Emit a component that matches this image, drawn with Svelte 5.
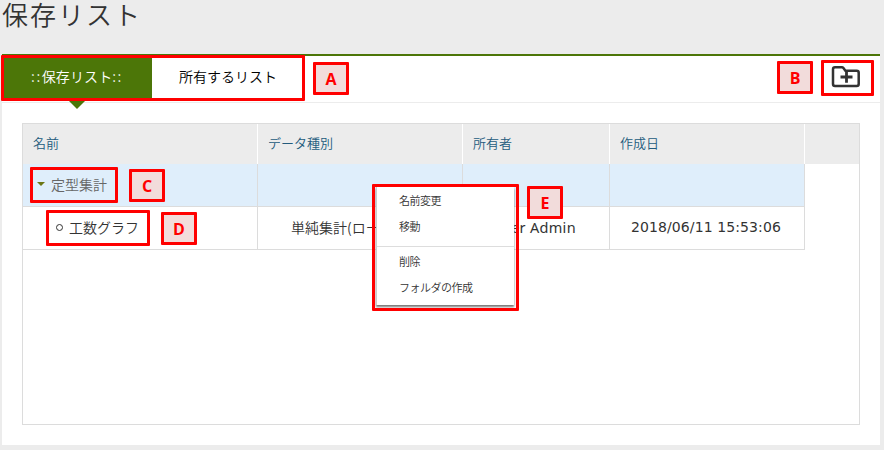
<script>
  const columns = ['名前', 'データ種別', '所有者', '作成日'];
</script>

{#snippet mark(letter, x, y)}
  <span class="mark" style:left="{x}px" style:top="{y}px"><span>{letter}</span></span>
{/snippet}

{#snippet frame(x, y, w, h)}
  <span class="frame" style:left="{x}px" style:top="{y}px" style:width="{w}px" style:height="{h}px"></span>
{/snippet}

<div class="page">
  <h1>保存リスト</h1>
  <main>
    <nav>
      <button class="tab active">::<span>保存リスト</span>::</button>
      <button class="tab">所有するリスト</button>
      <button class="add" aria-label="フォルダの作成">
        <svg width="30" height="24" viewBox="0 0 30 24" fill="none" stroke="#333" stroke-width="2.5">
          <path d="M4 2.3h6.8q1 0 1.6.8l2 2.7h11.3q2 0 2 2v11.1q0 2-2 2H4q-2 0-2-2V4.3q0-2 2-2z" stroke-linejoin="round" />
          <path d="M9.5 12h12M15.5 6.3v11.4" stroke-width="2.8" />
        </svg>
      </button>
    </nav>
    <section class="list">
      <div class="row head">
        {#each columns as c}<div class="cell">{c}</div>{/each}
      </div>
      <div class="row folder">
        <div class="cell"><i class="caret"></i><span>定型集計</span></div>
        <div class="cell"></div><div class="cell"></div><div class="cell"></div>
      </div>
      <div class="row item">
        <div class="cell"><i class="dot"></i><span>工数グラフ</span></div>
        <div class="cell">単純集計(ロー</div>
        <div class="cell"><span class="owner">User Admin</span></div>
        <div class="cell"><span class="date">2018/06/11 15:53:06</span></div>
      </div>
    </section>
  </main>

  <div class="menu">
    <div>名前変更</div>
    <div>移動</div>
    <hr />
    <div>削除</div>
    <div>フォルダの作成</div>
  </div>

  {@render frame(1, 55, 304, 46)}
  {@render frame(821, 60, 53, 36)}
  {@render frame(30, 167, 88, 36)}
  {@render frame(46, 210, 104, 36)}
  {@render frame(372, 184, 147, 127)}
  {@render mark('A', 313, 62)}
  {@render mark('B', 777, 61)}
  {@render mark('C', 129, 169)}
  {@render mark('D', 161, 212)}
  {@render mark('E', 527, 186)}
</div>

<style>
  :global(body) { margin: 0; background: #ececec; }
  .page {
    position: relative; box-sizing: border-box; width: 884px; height: 450px; overflow: hidden;
    padding: 0 4px 5px 2px; background: #ececec; color: #333;
    font: 350 14px/20px "Noto Sans CJK JP", "DejaVu Sans", sans-serif;
    display: flex; flex-direction: column;
  }
  h1 {
    box-sizing: border-box; margin: 0; padding-top: 1px; height: 54px;
    font: 350 26px/30px "Liberation Sans", "Noto Sans CJK JP", sans-serif;
    letter-spacing: 2px; white-space: nowrap;
  }
  main { flex: 1; background: #fff; border-top: 2px solid #4c7608; }
  nav { display: flex; height: 46px; border-bottom: 1px solid #ececec; }
  .tab {
    position: relative; border: 0; padding: 0 0 6px; width: 152px; background: #fff; color: #000;
    font: 350 14px/20px "Noto Sans CJK JP", sans-serif; white-space: nowrap;
  }
  .tab.active { width: 150px; height: 45px; padding-bottom: 5px; background: #4c7608; color: #fff; letter-spacing: 1.6px; }
  .tab.active span { letter-spacing: .1px; }
  .tab.active::after {
    content: ""; position: absolute; left: 67px; top: 45px;
    border: 8px solid transparent; border-top-color: #4c7608; border-bottom: 0;
  }
  .add { margin: 8px 18px 0 auto; padding: 0; width: 32px; height: 26px; border: 0; background: none; }
  .add svg { display: block; margin-left: 1px; }
  .list { box-sizing: border-box; width: 838px; height: 302px; margin: 20px 0 0 20px; border: 1px solid #dcdcdc; }
  .row { display: grid; grid-template-columns: 235px 205px 147px 195px; height: 43px; }
  .cell { box-sizing: border-box; display: flex; align-items: center; border-right: 1px solid #dcdcdc; border-bottom: 1px solid #dcdcdc; padding: 0 0 2px 28px; white-space: nowrap; }
  .head { height: 40px; background: #ececec; }
  .head .cell { padding-left: 10px; font-size: 13px; color: #235b7c; border-right-color: #fff; border-bottom: 0; }
  .folder { width: 782px; background: #dfeefb; color: #666; }
  .folder .cell { padding-bottom: 3px; }
  .cell:first-child { padding-left: 10px; }
  .folder .cell:first-child { padding-left: 14px; }
  .item .cell:first-child { padding-left: 33px; }
  .item .cell:nth-child(2) { padding-left: 33px; }
  .caret { border: 4px solid transparent; border-top-color: #6b7614; border-bottom: 0; margin-right: 6px; }
  .dot { box-sizing: border-box; width: 7px; height: 7px; border: 1px solid #333; border-radius: 50%; margin-right: 6px; }
  .owner { font: 14.5px/20px "Noto Sans", sans-serif; letter-spacing: .3px; }
  .item .cell:nth-child(3) { padding-left: 30px; }
  .item .cell:nth-child(4) { padding-left: 21px; }
  .date { font: 14px/20px "DejaVu Sans", sans-serif; letter-spacing: .1px; }
  .menu {
    position: absolute; left: 376px; top: 187px; width: 138px; height: 118px; box-sizing: border-box;
    background: #fff; border: 1px solid #ccc; border-width: 0 0 0 1px;
    box-shadow: 0 2px 2px #777; font-size: 11px; line-height: 26px; letter-spacing: -.5px;
  }
  .menu div { padding-left: 22px; }
  .menu hr { margin: 7px 0 1px; border: 0; border-top: 1px solid #ddd; }
  .frame, .mark { position: absolute; box-sizing: border-box; border: 3px solid #f00; border-radius: 1px; }
  .mark {
    width: 36px; height: 33px; background: #f2dcdb; color: #f00;
    display: flex; align-items: center; justify-content: center;
    font: 700 16px/20px "Open Sans", sans-serif;
  }
</style>
